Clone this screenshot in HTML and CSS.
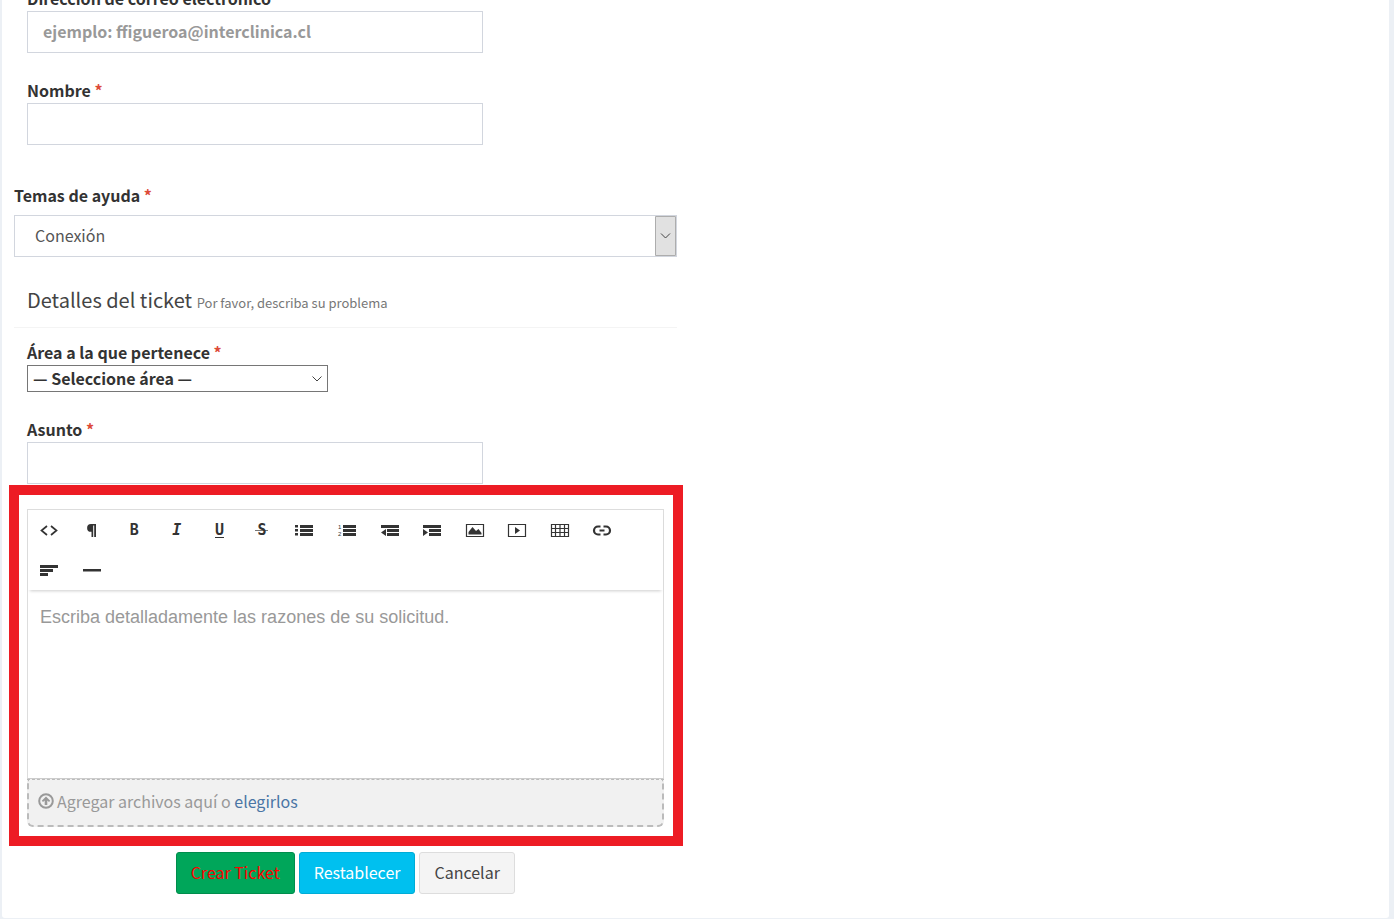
FILE: index.html
```html
<!DOCTYPE html>
<html lang="es">
<head>
    <meta charset="UTF-8">
    <meta name="viewport" content="width=device-width, initial-scale=1.0">
    <title>Crear Ticket</title>
    <link rel="stylesheet" href="styles.css">
</head>
<body>
    <main class="box">
        <form class="ticket-form" id="ticketForm">
            <div class="field">
                <label for="correo">Dirección de correo electrónico</label>
                <input type="email" id="correo" class="form-control" placeholder="ejemplo: ffigueroa@interclinica.cl">
            </div>
            <div class="field">
                <label for="nombre">Nombre <span class="required">*</span></label>
                <input type="text" id="nombre" class="form-control">
            </div>

            <div class="topic">
                <label for="tema">Temas de ayuda <span class="required">*</span></label>
                <select id="tema" class="topic-select">
                    <option>Conexión</option>
                </select>
            </div>

            <div class="form-header">
                <h3>Detalles del ticket <small>Por favor, describa su problema</small></h3>
            </div>

            <div class="field">
                <label for="area">Área a la que pertenece <span class="required">*</span></label>
                <select id="area" class="area-select">
                    <option>— Seleccione área —</option>
                </select>
            </div>
            <div class="field last">
                <label for="asunto">Asunto <span class="required">*</span></label>
                <input type="text" id="asunto" class="form-control">
            </div>

            <div class="highlight">
                <div class="editor">
                    <div class="toolbar">
                        <button type="button" aria-label="HTML"><svg width="20" height="16" viewBox="0 0 20 16"><path d="M8 4L2.500 8.500l5.500 4.500M12 4l5.500 4.500-5.500 4.500" fill="none" stroke="#333" stroke-width="1.700"/></svg></button>
                        <button type="button" aria-label="Formato"><svg width="20" height="16" viewBox="0 0 20 16"><path d="M14 2H9a3.900 3.900 0 0 0 0 7.800h.5V15h1.700V3.500h1V15H14z" fill="#333"/></svg></button>
                        <button type="button" aria-label="Negrita">B</button>
                        <button type="button" aria-label="Cursiva"><i>I</i></button>
                        <button type="button" aria-label="Subrayado"><span class="underline">U</span></button>
                        <button type="button" aria-label="Tachado"><span class="strike">S</span></button>
                        <button type="button" aria-label="Lista"><svg width="20" height="16" viewBox="0 0 20 16"><path d="M1 3h3v2.500H1zM1 7h3v2.500H1zM1 11h3v2.500H1zM6 3h13v3H6zM6 7h13v3H6zM6 11h13v3H6z" fill="#333"/></svg></button>
                        <button type="button" aria-label="Lista numerada"><svg width="20" height="16" viewBox="0 0 20 16"><text class="num" x="1" y="7">1</text><text class="num" x="1" y="14">2</text><path d="M6 3h13v3H6zM6 7h13v3H6zM6 11h13v3H6z" fill="#333"/></svg></button>
                        <button type="button" aria-label="Reducir sangría"><svg width="20" height="16" viewBox="0 0 20 16"><path d="M1 3h18v3H1zM7 7h12v3H7zM7 11h12v3H7zM6 7v7L1 10.500z" fill="#333"/></svg></button>
                        <button type="button" aria-label="Aumentar sangría"><svg width="20" height="16" viewBox="0 0 20 16"><path d="M1 3h18v3H1zM7 7h12v3H7zM7 11h12v3H7zM1 7v7l5-3.500z" fill="#333"/></svg></button>
                        <button type="button" aria-label="Imagen"><svg width="20" height="16" viewBox="0 0 20 16"><path d="M1.500 2.500h17v12h-17z" fill="none" stroke="#333" stroke-width="1.200"/><path d="M3.500 12.500V10l4-5 3.500 4 2.500-2 3 4v1.500z" fill="#333"/></svg></button>
                        <button type="button" aria-label="Video"><svg width="20" height="16" viewBox="0 0 20 16"><path d="M1.500 2.500h17v12h-17z" fill="none" stroke="#333" stroke-width="1.200"/><path d="M8 5v7l5-3.500z" fill="#333"/></svg></button>
                        <button type="button" aria-label="Tabla"><svg width="20" height="16" viewBox="0 0 20 16"><path d="M1.500 2.500h17v12h-17zM1.500 6.500h17M1.500 10.500h17M5.500 2.500v12M10 2.500v12M14.500 2.500v12" fill="none" stroke="#333" stroke-width="1.200"/></svg></button>
                        <button type="button" aria-label="Enlace"><svg width="20" height="16" viewBox="0 0 20 16"><path d="M8.500 4.500H6a4 4 0 0 0 0 8h2.500M11.500 4.500H14a4 4 0 0 1 0 8h-2.500M7.500 8.500h5" fill="none" stroke="#333" stroke-width="2.200"/></svg></button>
                        <button type="button" aria-label="Alinear"><svg width="20" height="16" viewBox="0 0 20 16"><path d="M1 3h18v3H1zM1 7h13v3H1zM1 11h8v3H1z" fill="#333"/></svg></button>
                        <button type="button" aria-label="Línea"><svg width="20" height="16" viewBox="0 0 20 16"><path d="M1 7h18v2.500H1z" fill="#333"/></svg></button>
                    </div>
                    <textarea class="message" aria-label="Mensaje" placeholder="Escriba detalladamente las razones de su solicitud."></textarea>
                </div>
                <div class="dropzone">
                    <svg width="16" height="16" viewBox="0 0 16 16"><circle cx="8" cy="8" r="6.800" fill="none" stroke="#999" stroke-width="2"/><path d="M8 3.500l4.200 4.300-1.200 1.200-1.700-1.400V12H6.700V7.600L5 9 3.800 7.800z" fill="#999"/></svg>
                    <span>Agregar archivos aquí o <a href="#">elegirlos</a></span>
                </div>
            </div>

            <div class="buttons">
                <button type="submit" class="btn btn-success">Crear Ticket</button>
                <button type="reset" class="btn btn-info">Restablecer</button>
                <button type="button" class="btn btn-default">Cancelar</button>
            </div>
        </form>
    </main>
</body>
</html>
```
FILE: styles.css
```css
* {
    box-sizing: border-box;
}
body {
    margin: 0;
    background-color: #ecf0f5;
    color: #333;
    font-family: "Noto Sans CJK JP", "Noto Sans", sans-serif;
    font-size: 16px;
    line-height: 24px;
}
/* the form is scrolled past its first label */
.box {
    margin: -13px 5px 0 2px;
    padding-bottom: 24px;
    background-color: #fff;
    border-radius: 3px;
}
.ticket-form {
    width: 50%;
    padding: 0 19px 0 12px;
}
label {
    display: block;
    padding-bottom: 2px;
    font-weight: bold;
    line-height: 22px;
}
.required {
    color: #dd4b39;
}
input, select, textarea, button {
    font-family: inherit;
    font-size: 16px;
    color: #333;
}
.field {
    margin: 0 13px 26px;
}
.field.last {
    margin-bottom: 1px;
}
.form-control {
    display: block;
    width: 456px;
    max-width: 100%;
    height: 42px;
    padding: 0 15px 2px;
    border: 1px solid #d2d6de;
    background-color: #fff;
    font-weight: bold;
}
::placeholder {
    color: #999;
    opacity: 1;
}
select {
    display: block;
    appearance: none;
    border-radius: 0;
    background-color: #fff;
    background-repeat: no-repeat;
}
.topic {
    padding-top: 13px;
}
.topic-select {
    width: 100%;
    height: 42px;
    margin-top: 7px;
    padding: 0 30px 2px 20px;
    border: 1px solid #d2d6de;
    color: #555;
    background-image: url("data:image/svg+xml,%3Csvg xmlns='http://www.w3.org/2000/svg' width='21' height='40'%3E%3Cpath d='M.5.5h20v39H.5z' fill='%23e1e1e1' stroke='%23adadad'/%3E%3Cpath d='M6 17.500l4.500 4.500 4.500-4.500' fill='none' stroke='%23444'/%3E%3C/svg%3E");
    background-position: right center;
}
.form-header {
    padding: 28px 13px 12px;
    margin-bottom: 13px;
    border-bottom: 1px solid #f4f4f4;
}
h3 {
    margin: 0;
    color: #444;
    font-size: 20px;
    font-weight: normal;
    line-height: 30px;
}
h3 small {
    color: #777;
    font-size: 13px;
    line-height: 20px;
}
.area-select {
    width: 301px;
    height: 27px;
    padding: 0 20px 4px 5px;
    border: 1px solid #767676;
    font-weight: bold;
    background-image: url("data:image/svg+xml,%3Csvg xmlns='http://www.w3.org/2000/svg' width='10' height='6'%3E%3Cpath d='M.5.5L5 5 9.500.5' fill='none' stroke='%23444'/%3E%3C/svg%3E");
    background-position: right 5px center;
}
.highlight {
    margin: 0 -6px 0 -5px;
    padding: 14px 9px 9px 8px;
    border: 10px solid #ed1c24;
}
.editor {
    border: 1px solid #ddd;
    border-bottom-color: #ccc;
}
.toolbar {
    display: grid;
    grid-template-columns: repeat(14, 1fr);
    padding-right: 39px;
    position: relative;
    box-shadow: 0 3px 3px -2px rgba(0, 0, 0, 0.2);
}
.toolbar button {
    display: flex;
    align-items: center;
    justify-content: center;
    height: 40px;
    padding: 0;
    border: none;
    background: none;
    font-family: "DejaVu Sans Mono", monospace;
    font-size: 15px;
    font-weight: bold;
    line-height: 16px;
    cursor: pointer;
}
.underline {
    border-bottom: 1px solid #333;
    line-height: 14px;
}
.strike {
    padding: 0 2px;
    background: linear-gradient(#777, #777) center / 100% 1px no-repeat;
}
.num {
    font: 6px "Liberation Sans", sans-serif;
    fill: #333;
}
.message {
    display: block;
    width: 100%;
    height: 188px;
    padding: 14px 12px;
    border: none;
    resize: none;
    font-family: "Liberation Sans", Arial, sans-serif;
    font-size: 18px;
    line-height: 26px;
}
.dropzone {
    display: flex;
    align-items: center;
    gap: 3px;
    height: 48px;
    padding: 0 9px 3px;
    border: 2px dashed #bbb;
    border-top-width: 1px;
    border-radius: 0 0 6px 6px;
    background-color: #f1f1f1;
    color: #999;
}
.dropzone a {
    color: #4a75a5;
    text-decoration: none;
}
.buttons {
    display: flex;
    justify-content: center;
    gap: 4px;
    margin-top: 6px;
}
.btn {
    height: 42px;
    padding: 0 14px 2px;
    border: 1px solid;
    border-radius: 3px;
    cursor: pointer;
}
.btn-success {
    background-color: #00a65a;
    border-color: #008d4c;
    color: #f00;
}
.btn-info {
    background-color: #00c0ef;
    border-color: #00acd6;
    color: #fff;
}
.btn-default {
    background-color: #f4f4f4;
    border-color: #ddd;
    color: #444;
}
```
